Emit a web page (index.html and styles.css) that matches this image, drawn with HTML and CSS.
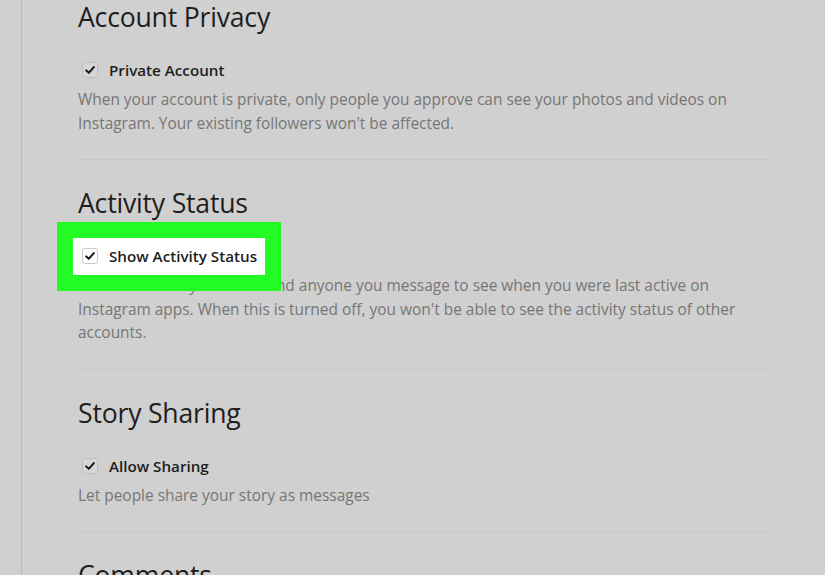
FILE: index.html
```
<!DOCTYPE html>
<html>
<head>
<meta charset="utf-8">
<link rel="stylesheet" href="styles.css">
</head>
<body>
<div class="page">
  <div class="rail"></div>
  <main class="content">
    <section class="section">
      <h2 class="title">Account Privacy</h2>
      <div class="row">
        <span class="box"><svg viewBox="0 0 16 16" width="16" height="16"><path d="M3.6 8.4 L6.6 11.2 L12.4 4.6" fill="none" stroke="#111" stroke-width="2.2" stroke-linecap="round" stroke-linejoin="round"/></svg></span>
        <span class="label">Private Account</span>
      </div>
      <p class="desc">When your account is private, only people you approve can see your photos and videos on Instagram. Your existing followers won't be affected.</p>
    </section>
    <section class="section">
      <h2 class="title">Activity Status</h2>
      <div class="row hl">
        <span class="box"><svg viewBox="0 0 16 16" width="16" height="16"><path d="M3.6 8.4 L6.6 11.2 L12.4 4.6" fill="none" stroke="#111" stroke-width="2.2" stroke-linecap="round" stroke-linejoin="round"/></svg></span>
        <span class="label">Show Activity Status</span>
      </div>
      <p class="desc">Allow accounts you follow and anyone you message to see when you were last active on Instagram apps. When this is turned off, you won't be able to see the activity status of other accounts.</p>
    </section>
    <section class="section">
      <h2 class="title">Story Sharing</h2>
      <div class="row">
        <span class="box"><svg viewBox="0 0 16 16" width="16" height="16"><path d="M3.6 8.4 L6.6 11.2 L12.4 4.6" fill="none" stroke="#111" stroke-width="2.2" stroke-linecap="round" stroke-linejoin="round"/></svg></span>
        <span class="label">Allow Sharing</span>
      </div>
      <p class="desc">Let people share your story as messages</p>
    </section>
    <section class="section last">
      <h2 class="title">Comments</h2>
    </section>
  </main>
</div>
</body>
</html>
```
FILE: styles.css
```
html, body {
  margin: 0;
  padding: 0;
  background: #d0d0d0;
  height: 100%;
  overflow: hidden;
}
.page {
  display: flex;
  height: 575px;
  overflow: hidden;
  font-family: "Open Sans", "Noto Sans", sans-serif;
}
.rail {
  width: 21px;
  border-right: 1px solid #b9b9b9;
  flex: none;
}
.content {
  margin-left: 56px;
  width: 692px;
  margin-top: -26px;
}
.section {
  border-bottom: 1px solid #c6c6c6;
  padding-top: 25px;
  padding-bottom: 24px;
}
.section.last {
  border-bottom: none;
}
.title {
  margin: 0;
  font-size: 26.6px;
  font-weight: 400;
  color: #1e1e1e;
  line-height: 36px;
  letter-spacing: -0.2px;
}
.row {
  display: flex;
  align-items: center;
  gap: 11px;
  margin-top: 25px;
  padding-left: 4px;
  height: 20px;
}
.row.hl {
  position: relative;
  z-index: 0;
}
.row.hl::before {
  content: "";
  position: absolute;
  left: -5px;
  top: -8px;
  width: 192px;
  height: 37px;
  background: #ffffff;
  box-shadow: 0 0 0 16px #22fb24;
  z-index: -1;
}
.box {
  width: 16px;
  height: 16px;
  box-sizing: border-box;
  border: 1px solid #bdbdbd;
  border-radius: 3px;
  background: #d6d6d6;
  display: flex;
  align-items: center;
  justify-content: center;
  flex: none;
}
.row.hl .box {
  background: #fff;
  border-color: #ccc;
}
.box svg {
  display: block;
}
.label {
  font-size: 15.2px;
  font-weight: 600;
  color: #1e1e1e;
}
.desc {
  margin: 8px 0 0;
  font-size: 15.45px;
  line-height: 23.5px;
  color: #767676;
}
```
